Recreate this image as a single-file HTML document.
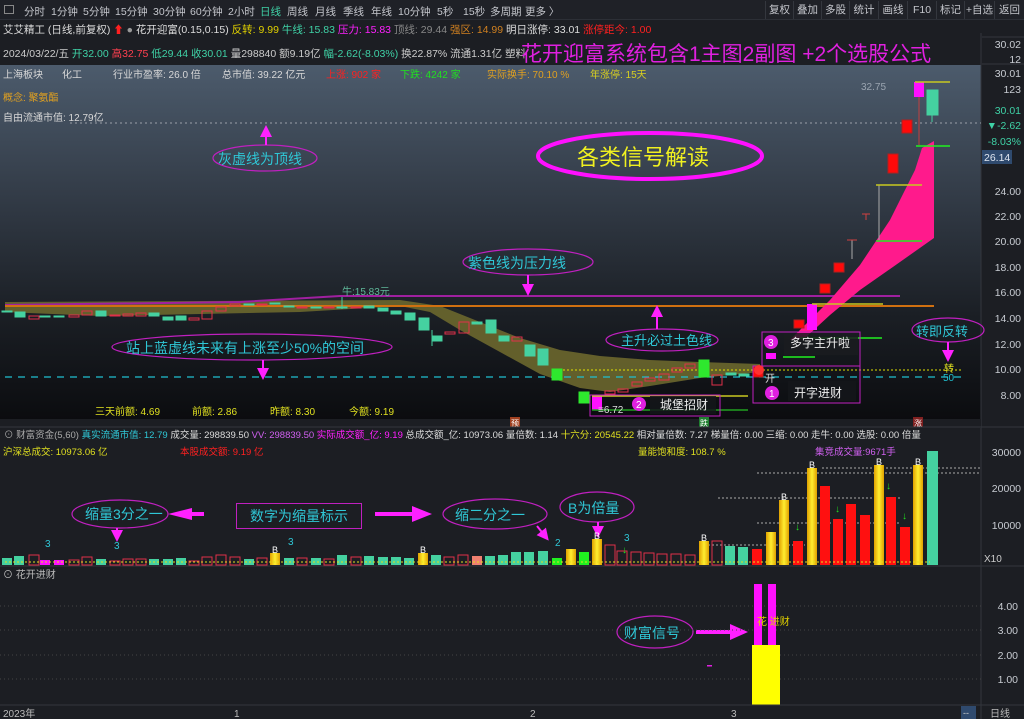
<!DOCTYPE html>
<html><head><meta charset="utf-8"><style>
*{margin:0;padding:0;box-sizing:border-box}
body{width:1024px;height:719px;overflow:hidden;background:#1c1e23;font-family:"Liberation Sans","Noto Sans CJK SC",sans-serif;font-size:10px;color:#c8c8c8;position:relative}
.a{position:absolute;white-space:nowrap}
#tb{left:0;top:0;width:1024px;height:20px;background:#1f2127;border-bottom:1px solid #2c2f36}
#tb span{position:absolute;top:4px;font-size:10.5px;color:#c4c6cc}
.btn{position:absolute;top:1px;height:18px;border-left:1px solid #34373e;font-size:10.5px;color:#c4c6cc;text-align:center;line-height:18px}
</style></head><body>
<div id="tb" class="a">
<div class="a" style="left:4px;top:5px;width:10px;height:9px;border:1px solid #888"></div>
<span style="left:24px">分时</span><span style="left:51px">1分钟</span><span style="left:83px">5分钟</span><span style="left:115px">15分钟</span><span style="left:153px">30分钟</span><span style="left:190px">60分钟</span><span style="left:228px">2小时</span><span style="left:260px;color:#3fd1a6">日线</span><span style="left:287px">周线</span><span style="left:315px">月线</span><span style="left:343px">季线</span><span style="left:371px">年线</span><span style="left:398px">10分钟</span><span style="left:437px">5秒</span><span style="left:463px">15秒</span><span style="left:490px">多周期</span><span style="left:525px">更多 〉</span>
<div class="btn" style="left:765px;width:28px">复权</div><div class="btn" style="left:793px;width:28px">叠加</div><div class="btn" style="left:821px;width:28px">多股</div><div class="btn" style="left:849px;width:29px">统计</div><div class="btn" style="left:878px;width:29px">画线</div><div class="btn" style="left:907px;width:29px">F10</div><div class="btn" style="left:936px;width:28px">标记</div><div class="btn" style="left:964px;width:30px">+自选</div><div class="btn" style="left:994px;width:30px">返回</div>
</div>
<div class="a" style="left:3px;top:22px;font-size:10.5px;color:#ddd">艾艾精工 (日线,前复权) <span style="color:#ff2020">⬆</span> <span style="color:#999">●</span> 花开迎富(0.15,0.15) <span style="color:#e0d000">反转: 9.99</span> <span style="color:#3fd1a6">牛线: 15.83</span> <span style="color:#ff20ff">压力: 15.83</span> <span style="color:#888">顶线: 29.44</span> <span style="color:#d08020">强区: 14.99</span> 明日涨停: 33.01 <span style="color:#ff2020">涨停距今: 1.00</span></div>
<div class="a" style="left:3px;top:46px;font-size:10.5px;color:#ccc">2024/03/22/五 <span style="color:#3fd1a6">开32.00</span> <span style="color:#ff4050">高32.75</span> <span style="color:#3fd1a6">低29.44</span> <span style="color:#3fd1a6">收30.01</span> 量298840 额9.19亿 <span style="color:#3fd1a6">幅-2.62(-8.03%)</span> 换22.87% 流通1.31亿 塑料</div>
<div class="a" style="left:521px;top:38px;font-size:21px;color:#e020e0;letter-spacing:0px">花开迎富系统包含1主图2副图 +2个选股公式</div>

<svg class="a" style="left:0;top:0" width="1024" height="719">
<defs>
<linearGradient id="bg" x1="0" y1="0" x2="0" y2="1"><stop offset="0" stop-color="#4c5b6c"/><stop offset="0.35" stop-color="#343d49"/><stop offset="0.7" stop-color="#1b1f25"/><stop offset="1" stop-color="#0b0c0f"/></linearGradient>
<linearGradient id="gy" x1="0" y1="0" x2="1" y2="0"><stop offset="0" stop-color="#e0a000"/><stop offset="0.5" stop-color="#ffee30"/><stop offset="1" stop-color="#e0a000"/></linearGradient>
<marker id="ah" markerWidth="6" markerHeight="6" refX="3" refY="3" orient="auto"><path d="M0,0L6,3L0,6z" fill="#ff20ff"/></marker>
</defs>
<rect x="0" y="65" width="981" height="355" fill="url(#bg)"/>
<rect x="981" y="33" width="43" height="387" fill="#1c1e23"/>
<line x1="981" y1="33" x2="981" y2="719" stroke="#33363d"/>
<g font-size="10" fill="#d8d8d8">
<text x="3" y="78">上海板块</text><text x="62" y="78">化工</text><text x="113" y="78">行业市盈率:  26.0 倍</text><text x="222" y="78">总市值:  39.22 亿元</text><text x="326" y="78" fill="#ff2020">上涨:  902 家</text><text x="400" y="78" fill="#20e020">下跌:  4242 家</text><text x="487" y="78" fill="#e0a020">实际换手: 70.10 %</text><text x="590" y="78" fill="#d8d020">年涨停: 15天</text>
<text x="3" y="101" fill="#e0a020">概念:   聚氨酯</text>
<text x="3" y="121">自由流通市值: 12.79亿</text>
</g>
<line x1="70" y1="123" x2="981" y2="123" stroke="#9aa0a8" stroke-dasharray="2,3"/>
<path d="M5,302 L400,300 L440,306 L480,322 L520,338 L560,350 L600,356 L650,360 L700,362 L760,364 L760,372 L700,378 L650,386 L610,392 L580,388 L540,374 L500,352 L460,330 L430,312 L400,306 L300,312 L200,314 L100,316 L5,312 Z" fill="#6b672e" opacity="0.9"/>
<polyline points="5,305 240,302 340,296 900,296" fill="none" stroke="#a020a0" stroke-width="2"/>
<line x1="5" y1="306" x2="934" y2="306" stroke="#d07010" stroke-width="2"/>
<path d="M790,340 L830,300 L860,265 L890,220 L915,170 L922,148 L934,141 L934,238 L900,262 L860,290 L830,315 L805,338 Z" fill="#ff1a8c"/>
<line x1="5" y1="377" x2="962" y2="377" stroke="#20c0d0" stroke-dasharray="7,6" stroke-width="1.2"/>
<line x1="555" y1="370" x2="962" y2="370" stroke="#e0e000" stroke-dasharray="2,2"/>
<g stroke-width="1">
<g fill="#45d1a0" stroke="#45d1a0">
<rect x="2" y="311" width="10" height="1"/><rect x="15" y="312" width="10" height="5"/><rect x="40" y="316" width="10" height="1"/><rect x="54" y="316" width="10" height="1"/><rect x="96" y="311" width="10" height="5"/><rect x="149" y="313" width="10" height="3"/><rect x="163" y="317" width="10" height="3"/><rect x="176" y="316" width="10" height="4"/><rect x="244" y="304" width="10" height="1"/><rect x="270" y="303" width="10" height="1"/><rect x="284" y="306" width="10" height="1"/><rect x="311" y="307" width="10" height="1"/><rect x="337" y="307" width="10" height="1"/><rect x="364" y="306" width="10" height="2"/><rect x="378" y="308" width="10" height="3"/><rect x="391" y="311" width="10" height="3"/><rect x="405" y="313" width="10" height="7"/><rect x="419" y="318" width="10" height="12"/><rect x="432" y="336" width="10" height="5"/><rect x="472" y="322" width="10" height="2"/><rect x="486" y="320" width="10" height="13"/><rect x="499" y="336" width="10" height="5"/><rect x="525" y="345" width="10" height="11"/><rect x="538" y="349" width="10" height="16"/><rect x="726" y="373" width="10" height="2"/><rect x="739" y="374" width="10" height="2"/><rect x="927" y="90" width="11" height="25"/>
<line x1="932" y1="115" x2="932" y2="122"/><line x1="432" y1="330" x2="432" y2="346"/>
</g>
<g fill="#2ee82e" stroke="#2ee82e"><rect x="552" y="369" width="10" height="11"/><rect x="579" y="392" width="10" height="11"/><rect x="699" y="360" width="10" height="17"/></g>
<g fill="none" stroke="#e0304a">
<rect x="29" y="316" width="10" height="3"/><rect x="69" y="315" width="10" height="2"/><rect x="82" y="311" width="10" height="4"/><rect x="110" y="315" width="10" height="1"/><rect x="123" y="314" width="10" height="2"/><rect x="136" y="313" width="10" height="3"/><rect x="189" y="318" width="10" height="2"/><rect x="202" y="311" width="10" height="8"/><rect x="216" y="307" width="10" height="4"/><rect x="230" y="304" width="10" height="2"/><rect x="257" y="304" width="10" height="1"/><rect x="297" y="307" width="10" height="1"/><rect x="324" y="307" width="10" height="1"/><rect x="351" y="307" width="10" height="1"/><rect x="445" y="332" width="10" height="2"/><rect x="459" y="322" width="10" height="11"/><rect x="512" y="337" width="10" height="4"/><rect x="605" y="391" width="10" height="3"/><rect x="618" y="389" width="10" height="3"/><rect x="632" y="382" width="10" height="4"/><rect x="645" y="378" width="10" height="3"/><rect x="659" y="374" width="10" height="6"/><rect x="672" y="368" width="10" height="4"/><rect x="685" y="364" width="10" height="4"/><rect x="712" y="375" width="10" height="10"/>
</g>
<g fill="#ff0a0a" stroke="#b02020"><rect x="753" y="367" width="10" height="10"/><rect x="794" y="320" width="10" height="8"/><rect x="820" y="284" width="10" height="9"/><rect x="834" y="263" width="10" height="9"/><rect x="888" y="154" width="10" height="19"/><rect x="902" y="120" width="10" height="13"/></g>
<g fill="#ff10ff"><rect x="592" y="396" width="10" height="14"/><rect x="766" y="353" width="10" height="6"/><rect x="807" y="304" width="10" height="26"/><rect x="914" y="82" width="10" height="15"/></g>
<line x1="919" y1="97" x2="919" y2="145" stroke="#c04040"/>
<line x1="852" y1="240" x2="852" y2="259" stroke="#aaa"/><line x1="847" y1="240" x2="857" y2="240" stroke="#d04040"/>
<line x1="866" y1="214" x2="866" y2="220" stroke="#d04040"/><line x1="862" y1="214" x2="870" y2="214" stroke="#d04040"/>
<line x1="879" y1="185" x2="879" y2="240" stroke="#aaa"/>
</g>
<g stroke-width="1.5">
<line x1="915" y1="82" x2="950" y2="82" stroke="#c8c820"/><line x1="916" y1="146" x2="950" y2="146" stroke="#20f020"/>
<line x1="876" y1="185" x2="922" y2="185" stroke="#c8c820"/><line x1="876" y1="241" x2="922" y2="241" stroke="#20f020"/>
<line x1="812" y1="304" x2="883" y2="304" stroke="#c8c820"/>
<line x1="800" y1="338" x2="882" y2="338" stroke="#20f020"/><line x1="783" y1="357" x2="815" y2="357" stroke="#20f020"/>
<line x1="592" y1="396" x2="748" y2="396" stroke="#c8c820"/><line x1="592" y1="410" x2="748" y2="410" stroke="#20a020"/>
</g>
<text x="861" y="90" font-size="10" fill="#9aa4b0">32.75</text>
<text x="342" y="295" font-size="10" fill="#5fb89a">牛:15.83元</text>
<line x1="342" y1="297" x2="342" y2="309" stroke="#45d1a0"/>
<text x="598" y="413" font-size="10" fill="#ddd">≡6.72</text>
<g fill="none" stroke="#c020c0" stroke-width="1.2">
<ellipse cx="265" cy="158" rx="52" ry="13"/><ellipse cx="528" cy="262" rx="65" ry="13"/><ellipse cx="252" cy="347" rx="140" ry="13"/><ellipse cx="662" cy="340" rx="56" ry="11"/><ellipse cx="948" cy="330" rx="36" ry="12"/>
<ellipse cx="120" cy="514" rx="48" ry="14"/><ellipse cx="495" cy="514" rx="52" ry="15"/><ellipse cx="597" cy="507" rx="37" ry="15"/><ellipse cx="655" cy="632" rx="38" ry="16"/>
</g>
<ellipse cx="650" cy="156" rx="112" ry="23" fill="none" stroke="#ff10ff" stroke-width="4"/>
<g stroke="#ff20ff" stroke-width="2" marker-end="url(#ah)">
<line x1="266" y1="145" x2="266" y2="131"/><line x1="528" y1="275" x2="528" y2="290"/><line x1="263" y1="360" x2="263" y2="374"/><line x1="657" y1="329" x2="657" y2="311"/><line x1="948" y1="342" x2="948" y2="356"/>
<line x1="117" y1="528" x2="117" y2="536"/><line x1="537" y1="526" x2="545" y2="536"/><line x1="598" y1="522" x2="598" y2="532"/>
</g>
<g fill="#ff20ff"><path d="M168,512 L180,512 L180,508 L204,514 L180,520 L180,516 L168,516 Z" transform="rotate(180 186 514)"/><path d="M375,512 L412,512 L412,506 L432,514 L412,522 L412,516 L375,516 Z"/><path d="M696,630 L730,630 L730,624 L748,632 L730,640 L730,634 L696,634 Z"/></g>
<g font-size="14" fill="#2fc7d6">
<text x="218" y="164">灰虚线为顶线</text><text x="468" y="268">紫色线为压力线</text><text x="126" y="353">站上蓝虚线未来有上涨至少50%的空间</text><text x="621" y="345" font-size="13">主升必过土色线</text><text x="916" y="336" font-size="13">转即反转</text>
<text x="85" y="519">缩量3分之一</text><text x="455" y="520">缩二分之一</text><text x="568" y="513">B为倍量</text><text x="624" y="638">财富信号</text>
</g>
<text x="577" y="165" font-size="22" fill="#f0f020">各类信号解读</text>
<text x="944" y="372" font-size="10" fill="#e0e020">转</text><text x="943" y="381" font-size="10" fill="#20c0d0">50</text>
<rect x="762" y="332" width="98" height="34" fill="none" stroke="#c020c0"/>
<rect x="784" y="333" width="74" height="22" fill="#1a1c20" opacity="0.85"/>
<circle cx="771" cy="342" r="7" fill="#e020e0"/><text x="768" y="346" font-size="10" fill="#fff">3</text>
<text x="790" y="347" font-size="12" fill="#eee">多字主升啦</text>
<rect x="753" y="366" width="107" height="37" fill="none" stroke="#c020c0"/>
<rect x="788" y="381" width="68" height="20" fill="#14161a" opacity="0.85"/>
<circle cx="772" cy="393" r="7" fill="#e020e0"/><text x="769" y="397" font-size="10" fill="#fff">1</text>
<text x="794" y="397" font-size="12" fill="#eee">开字进财</text><text x="765" y="382" font-size="10" fill="#ddd">开</text>
<rect x="590" y="395" width="130" height="21" fill="none" stroke="#c020c0"/>
<rect x="650" y="396" width="66" height="18" fill="#14161a" opacity="0.85"/>
<circle cx="639" cy="404" r="7" fill="#e020e0"/><text x="636" y="408" font-size="10" fill="#fff">2</text>
<text x="660" y="409" font-size="12" fill="#eee">城堡招财</text>
<circle cx="759" cy="370" r="5" fill="#ff3030"/>
<g font-size="10" fill="#e0e020"><text x="95" y="415">三天前额: 4.69</text><text x="192" y="415">前额: 2.86</text><text x="270" y="415">昨额: 8.30</text><text x="349" y="415">今额: 9.19</text></g>
<rect x="0" y="419" width="981" height="9" fill="#1c1e23"/>
<rect x="510" y="417" width="10" height="10" fill="#a04020"/><text x="511" y="426" font-size="8" fill="#fff">预</text>
<rect x="699" y="417" width="10" height="10" fill="#208030"/><text x="700" y="426" font-size="8" fill="#fff">跌</text>
<rect x="913" y="417" width="10" height="10" fill="#802020"/><text x="914" y="426" font-size="8" fill="#fff">涨</text>
<line x1="0" y1="427" x2="1024" y2="427" stroke="#33363d"/>
<g font-size="10.5" fill="#c8ccd2" text-anchor="end">
<text x="1021" y="48">30.02</text><text x="1021" y="63">12</text><text x="1021" y="77">30.01</text><text x="1021" y="93">123</text><text x="1021" y="114" fill="#3fd1a6">30.01</text><text x="1021" y="129" fill="#3fd1a6">▼-2.62</text><text x="1021" y="145" fill="#3fd1a6">-8.03%</text>
<text x="1021" y="195">24.00</text><text x="1021" y="220">22.00</text><text x="1021" y="245">20.00</text><text x="1021" y="271">18.00</text><text x="1021" y="296">16.00</text><text x="1021" y="322">14.00</text><text x="1021" y="348">12.00</text><text x="1021" y="373">10.00</text><text x="1021" y="399">8.00</text>
<text x="1021" y="456">30000</text><text x="1021" y="492">20000</text><text x="1021" y="529">10000</text>
<text x="1018" y="610">4.00</text><text x="1018" y="634">3.00</text><text x="1018" y="659">2.00</text><text x="1018" y="683">1.00</text>
</g>
<rect x="982" y="150" width="30" height="14" fill="#2f4a6e"/><text x="984" y="161" font-size="10.5" fill="#e0e6f0">26.14</text>
<line x1="982" y1="37" x2="1024" y2="37" stroke="#33363d"/><line x1="982" y1="64" x2="1024" y2="64" stroke="#33363d"/>
<g font-size="9.5">
<text x="4" y="438" fill="#aaa">⊙ 财富资金(5,60) <tspan fill="#2fc7d6">真实流通市值: 12.79</tspan> <tspan fill="#ddd">成交量: 298839.50</tspan> <tspan fill="#d060f0">VV: 298839.50</tspan> <tspan fill="#ff20ff">实际成交额_亿: 9.19</tspan> <tspan fill="#ddd">总成交额_亿: 10973.06 量倍数: 1.14</tspan> <tspan fill="#e0e020">十六分: 20545.22</tspan> <tspan fill="#ddd">相对量倍数: 7.27 梯量倍: 0.00 三缩: 0.00 走牛: 0.00 选股: 0.00 倍量</tspan></text>
<text x="3" y="455" fill="#e0e020">沪深总成交:  10973.06 亿</text><text x="180" y="455" fill="#ff2020">本股成交额:  9.19 亿</text><text x="638" y="455" fill="#e0e020">量能饱和度:  108.7 %</text><text x="815" y="455" fill="#d060f0">集竞成交量:9671手</text>
</g>
<g stroke="#aaa" stroke-dasharray="2,2"><line x1="822" y1="468" x2="981" y2="468"/><line x1="757" y1="473" x2="981" y2="473"/><line x1="718" y1="498" x2="900" y2="498"/><line x1="757" y1="523" x2="900" y2="523"/><line x1="700" y1="545" x2="805" y2="545"/></g>
<g fill="#45d1a0"><rect x="2" y="558" width="10" height="7"/><rect x="14" y="556" width="10" height="9"/><rect x="96" y="559" width="10" height="6"/><rect x="149" y="559" width="10" height="6"/><rect x="163" y="559" width="10" height="6"/><rect x="176" y="558" width="10" height="7"/><rect x="244" y="559" width="10" height="6"/><rect x="284" y="558" width="10" height="7"/><rect x="311" y="558" width="10" height="7"/><rect x="337" y="555" width="10" height="10"/><rect x="364" y="556" width="10" height="9"/><rect x="378" y="557" width="10" height="8"/><rect x="391" y="557" width="10" height="8"/><rect x="404" y="558" width="10" height="7"/><rect x="431" y="555" width="10" height="10"/><rect x="485" y="556" width="10" height="9"/><rect x="498" y="555" width="10" height="10"/><rect x="511" y="552" width="10" height="13"/><rect x="524" y="552" width="10" height="13"/><rect x="538" y="551" width="10" height="14"/><rect x="725" y="546" width="10" height="19"/><rect x="738" y="547" width="10" height="18"/><rect x="927" y="451" width="11" height="114"/></g>
<g fill="#20f020"><rect x="552" y="558" width="10" height="7"/><rect x="579" y="552" width="10" height="13"/></g>
<g fill="#ff10ff"><rect x="40" y="560" width="10" height="5"/><rect x="54" y="560" width="10" height="5"/></g>
<rect x="472" y="556" width="10" height="9" fill="#f08070"/>
<g fill="none" stroke="#e0304a"><rect x="29" y="555" width="10" height="10"/><rect x="69" y="560" width="10" height="5"/><rect x="82" y="557" width="10" height="8"/><rect x="110" y="561" width="10" height="4"/><rect x="123" y="559" width="10" height="6"/><rect x="136" y="559" width="10" height="6"/><rect x="189" y="561" width="10" height="4"/><rect x="202" y="557" width="10" height="8"/><rect x="216" y="555" width="10" height="10"/><rect x="230" y="557" width="10" height="8"/><rect x="257" y="558" width="10" height="7"/><rect x="297" y="558" width="10" height="7"/><rect x="324" y="559" width="10" height="6"/><rect x="351" y="557" width="10" height="8"/><rect x="444" y="557" width="10" height="8"/><rect x="458" y="555" width="10" height="10"/><rect x="605" y="545" width="10" height="20"/><rect x="617" y="551" width="10" height="14"/><rect x="631" y="552" width="10" height="13"/><rect x="644" y="553" width="10" height="12"/><rect x="657" y="554" width="10" height="11"/><rect x="671" y="554" width="10" height="11"/><rect x="685" y="555" width="10" height="10"/><rect x="712" y="541" width="10" height="24"/></g>
<g fill="#ff1010"><rect x="752" y="549" width="10" height="16"/><rect x="793" y="541" width="10" height="24"/><rect x="820" y="486" width="10" height="79"/><rect x="833" y="519" width="10" height="46"/><rect x="846" y="504" width="10" height="61"/><rect x="860" y="515" width="10" height="50"/><rect x="886" y="497" width="10" height="68"/><rect x="900" y="527" width="10" height="38"/></g>
<g fill="url(#gy)"><rect x="270" y="553" width="10" height="12"/><rect x="418" y="553" width="10" height="12"/><rect x="566" y="549" width="10" height="16"/><rect x="592" y="539" width="10" height="26"/><rect x="699" y="541" width="10" height="24"/><rect x="766" y="532" width="10" height="33"/><rect x="779" y="500" width="10" height="65"/><rect x="807" y="468" width="10" height="97"/><rect x="874" y="465" width="10" height="100"/><rect x="913" y="465" width="10" height="100"/></g>
<line x1="5" y1="562" x2="930" y2="562" stroke="#e0e020" stroke-dasharray="2,2"/>
<g font-size="9" fill="#fff"><text x="272" y="553">B</text><text x="420" y="553">B</text><text x="594" y="539">B</text><text x="701" y="541">B</text><text x="781" y="500">B</text><text x="809" y="468">B</text><text x="876" y="465">B</text><text x="915" y="465">B</text></g>
<g font-size="10" fill="#2fc7d6"><text x="45" y="547">3</text><text x="114" y="549">3</text><text x="288" y="545">3</text><text x="555" y="546">2</text><text x="624" y="541">3</text></g>
<g font-size="10" fill="#20e020"><text x="795" y="530">↓</text><text x="835" y="512">↓</text><text x="886" y="489">↓</text><text x="902" y="519">↓</text><text x="622" y="553">↓</text></g>
<text x="984" y="562" font-size="10" fill="#ccc">X10</text>
<line x1="0" y1="566" x2="1024" y2="566" stroke="#33363d"/>
<text x="3" y="578" font-size="10" fill="#bbb">⊙ 花开进财</text>
<g stroke="#444" stroke-dasharray="1,3"><line x1="0" y1="606" x2="981" y2="606"/><line x1="0" y1="630" x2="981" y2="630"/><line x1="0" y1="655" x2="981" y2="655"/><line x1="0" y1="679" x2="981" y2="679"/></g>
<rect x="754" y="584" width="8" height="62" fill="#ff10ff"/><rect x="768" y="584" width="8" height="62" fill="#ff10ff"/>
<rect x="752" y="645" width="28" height="60" fill="#ffff00"/>
<text x="757" y="625" font-size="10" fill="#e0d000">花 进财</text>
<rect x="707" y="665" width="5" height="1.5" fill="#e020e0"/>
<line x1="0" y1="705" x2="1024" y2="705" stroke="#33363d"/>
<g font-size="10" fill="#bbb"><text x="3" y="717">2023年</text><text x="234" y="717">1</text><text x="530" y="717">2</text><text x="731" y="717">3</text><text x="990" y="717">日线</text></g>
<rect x="961" y="706" width="15" height="13" fill="#2f4a6e"/><text x="963" y="716" font-size="9" fill="#ccc">--</text>
</svg>
<div class="a" style="left:236px;top:503px;width:126px;height:26px;border:1px solid #c020c0;font-size:14px;color:#2fc7d6;line-height:24px;text-align:center">数字为缩量标示</div>
</body></html>
